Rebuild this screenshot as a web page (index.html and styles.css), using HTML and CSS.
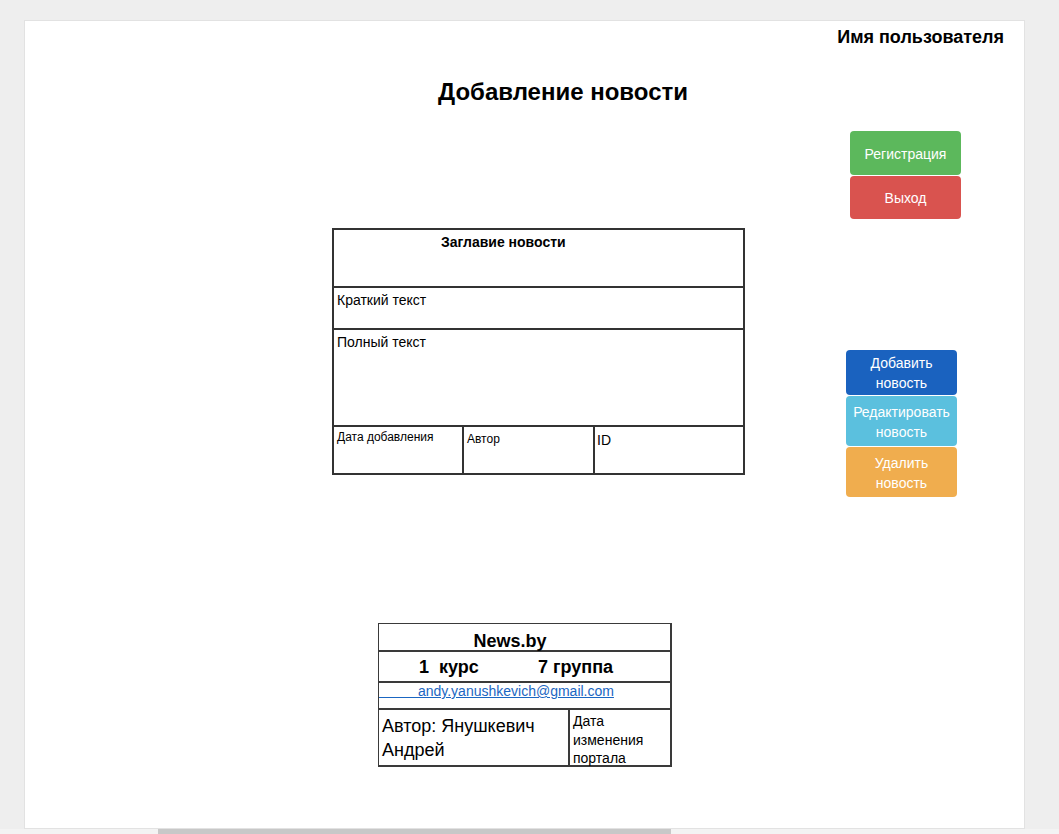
FILE: index.html
```html
<!DOCTYPE html>
<html lang="ru">
<head>
<meta charset="utf-8">
<title>Добавление новости</title>
<link rel="stylesheet" href="styles.css">
</head>
<body>
<div class="page">
  <header class="top">
    <span class="username">Имя пользователя</span>
  </header>
  <h1 class="title">Добавление новости</h1>
  <main class="main">
    <section class="form">
      <div class="row row-title"><span class="cell-title">Заглавие новости</span></div>
      <div class="row row-brief"><span>Краткий текст</span></div>
      <div class="row row-full"><span>Полный текст</span></div>
      <div class="row row-meta">
        <div class="meta meta-date">Дата добавления</div>
        <div class="meta meta-author">Автор</div>
        <div class="meta meta-id">ID</div>
      </div>
    </section>
    <aside class="actions">
      <div class="group group-auth">
        <button class="btn btn-green btn-reg">Регистрация</button>
        <button class="btn btn-red btn-exit">Выход</button>
      </div>
      <div class="group group-news">
        <button class="btn btn-blue btn-add">Добавить<br>новость</button>
        <button class="btn btn-cyan btn-edit">Редактировать<br>новость</button>
        <button class="btn btn-orange btn-del">Удалить<br>новость</button>
      </div>
    </aside>
  </main>
  <footer class="footer">
    <div class="frow frow-site">News.by</div>
    <div class="frow frow-group"><span class="course">1  курс</span><span>7 группа</span></div>
    <div class="frow frow-mail"><a class="mail" href="#">&nbsp;&nbsp;&nbsp;&nbsp;&nbsp;&nbsp;&nbsp;&nbsp;&nbsp;&nbsp;andy.yanushkevich@gmail.com</a></div>
    <div class="frow frow-info">
      <div class="author">Автор: Янушкевич<br>Андрей</div>
      <div class="changed">Дата<br>изменения<br>портала</div>
    </div>
  </footer>
</div>
<div class="hscroll"><div class="thumb"></div></div>
</body>
</html>
```

FILE: styles.css
```css
* { box-sizing: border-box; }
html, body { margin: 0; padding: 0; }
body {
  background: #eeeeee;
  font-family: "Liberation Sans", Arial, sans-serif;
  color: #000;
  overflow: hidden;
  width: 1059px;
  height: 834px;
}
.page {
  margin: 20px 0 0 24px;
  width: 1001px;
  height: 809px;
  background: #fff;
  border: 1px solid #e2e2e2;
  display: flex;
  flex-direction: column;
}
.top {
  display: flex;
  justify-content: flex-end;
  padding: 6px 20px 0 0;
}
.username {
  font-weight: bold;
  font-size: 18px;
  line-height: 21px;
}
.title {
  margin: 30px 0 0 0;
  padding-left: 77px;
  text-align: center;
  font-size: 24px;
  line-height: 28px;
  font-weight: bold;
}
.main {
  display: flex;
  align-items: flex-start;
  margin-top: 25px;
  padding-left: 307px;
}
.form {
  width: 413px;
  margin-top: 97px;
  border: 2px solid #333;
  font-size: 14px;
  line-height: 16px;
}
.row {
  border-top: 2px solid #333;
  padding: 4px 3px 0;
  overflow: hidden;
}
.row:first-child { border-top: none; }
.row-title { height: 56px; padding-left: 107px; font-weight: bold; }
.row-brief { height: 42px; }
.row-full { height: 97px; }
.row-meta {
  height: 48px;
  padding: 0;
  display: grid;
  grid-template-columns: 128px 131px 1fr;
}
.meta { padding: 3px 3px 0; font-size: 12px; line-height: 14px; }
.meta-author { border-left: 2px solid #333; padding-top: 5px; }
.meta-id { border-left: 2px solid #333; font-size: 14px; line-height: 16px; padding: 5px 2px 0; }
.actions {
  margin-left: 105px;
  display: flex;
  flex-direction: column;
}
.group { display: flex; flex-direction: column; gap: 1px; width: 111px; }
.group-news { margin-top: 131px; margin-left: -4px; }
.btn {
  border: none;
  border-radius: 4px;
  color: #fff;
  font-family: "Liberation Sans", Arial, sans-serif;
  font-size: 14px;
  line-height: 20px;
  padding: 0;
  width: 111px;
  text-align: center;
}
.btn-green { background: #5cb85c; }
.btn-red { background: #d9534f; }
.btn-blue { background: #1a62bf; }
.btn-cyan { background: #5bc0de; }
.btn-orange { background: #f0ad4e; }
.btn-reg { height: 44px; padding-top: 2px; }
.btn-exit { height: 43px; }
.btn-add { height: 45px; padding-top: 1px; }
.btn-edit { height: 50px; padding-top: 1px; }
.btn-del { height: 50px; padding-top: 1px; }
.footer {
  margin: 126px 0 0 353px;
  width: 294px;
  border: 2px solid #3a3a3a;
  border-top-width: 1px;
  border-left-width: 1px;
}
.frow {
  border-top: 2px solid #3a3a3a;
}
.frow:first-child { border-top: none; }
.frow-site {
  height: 26px;
  padding: 7px 29px 0 0;
  text-align: center;
  font-weight: bold;
  font-size: 18px;
  line-height: 20px;
}
.frow-group {
  height: 31px;
  display: flex;
  padding: 5px 0 0 40px;
  font-weight: bold;
  font-size: 18px;
  line-height: 21px;
}
.course { white-space: pre; width: 119px; }
.frow-mail {
  height: 27px;
  padding: 0;
  font-size: 14px;
  line-height: 16px;
}
.mail { color: #1a66c2; text-decoration: underline; }
.frow-info {
  height: 57px;
  display: grid;
  grid-template-columns: 191px 1fr;
  grid-template-rows: 55px;
}
.author {
  padding: 4px 3px 0;
  font-size: 18px;
  line-height: 24px;
  border-right: 2px solid #3a3a3a;
}
.changed {
  padding: 2px 2px 0 3px;
  font-size: 14px;
  line-height: 18.5px;
}
.hscroll {
  height: 5px;
  width: 1059px;
  background: #f3f3f3;
  display: flex;
  padding-left: 158px;
}
.thumb { width: 513px; height: 5px; background: #c8c8c8; }
```
